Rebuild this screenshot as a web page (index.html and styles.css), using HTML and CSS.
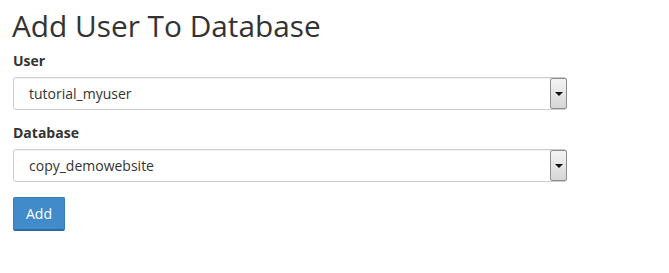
FILE: index.html
```html
<!DOCTYPE html>
<html>
<head>
<meta charset="utf-8">
<link rel="stylesheet" href="styles.css">
</head>
<body>
<div class="page">
  <h1 class="title">Add User To Database</h1>
  <div class="field">
    <div class="label">User</div>
    <div class="select">
      <span class="select-text">tutorial_myuser</span>
      <span class="select-btn"><span class="caret"></span></span>
    </div>
  </div>
  <div class="field">
    <div class="label">Database</div>
    <div class="select">
      <span class="select-text">copy_demowebsite</span>
      <span class="select-btn"><span class="caret"></span></span>
    </div>
  </div>
  <button class="btn">Add</button>
</div>
</body>
</html>
```

FILE: styles.css
```css
html, body {
  margin: 0;
  background: #ffffff;
}
.page {
  padding: 6px 0 0 13px;
  font-family: "Open Sans", "Liberation Sans", sans-serif;
  color: #333333;
}
.title {
  margin: 0 0 5px -1px;
  font-size: 29.8px;
  font-weight: 400;
  line-height: 40px;
  color: #333333;
}
.field {
  margin-bottom: 13px;
}
.field + .field {
  margin-bottom: 15px;
}
.label {
  font-size: 14px;
  font-weight: 700;
  line-height: 20px;
  margin-bottom: 6px;
}
.select {
  width: 554px;
  height: 33px;
  box-sizing: border-box;
  border: 1px solid #cccccc;
  border-radius: 3px;
  display: flex;
  align-items: stretch;
  box-shadow: inset 0 1px 1px rgba(0,0,0,0.05);
}
.select-text {
  flex: 1;
  display: flex;
  align-items: center;
  padding-left: 15px;
  font-size: 14px;
  color: #333333;
}
.select-btn {
  width: 17px;
  box-sizing: border-box;
  border: 1px solid #8c8c8c;
  border-radius: 2px;
  margin: 0 -1px 0 0;
  background: linear-gradient(to bottom, #f4f4f4, #d6d6d6);
  display: flex;
  align-items: center;
  justify-content: center;
}
.caret {
  width: 0;
  height: 0;
  border-left: 4px solid transparent;
  border-right: 4px solid transparent;
  border-top: 4px solid #111111;
}
.btn {
  display: block;
  width: 52px;
  height: 34px;
  padding: 0;
  border: 1px solid #357ebd;
  border-bottom: 2px solid #2d6aa3;
  border-radius: 2px;
  background: #428bca;
  color: #ffffff;
  font-family: "Open Sans", "Liberation Sans", sans-serif;
  font-size: 14px;
  line-height: 20px;
}
```
